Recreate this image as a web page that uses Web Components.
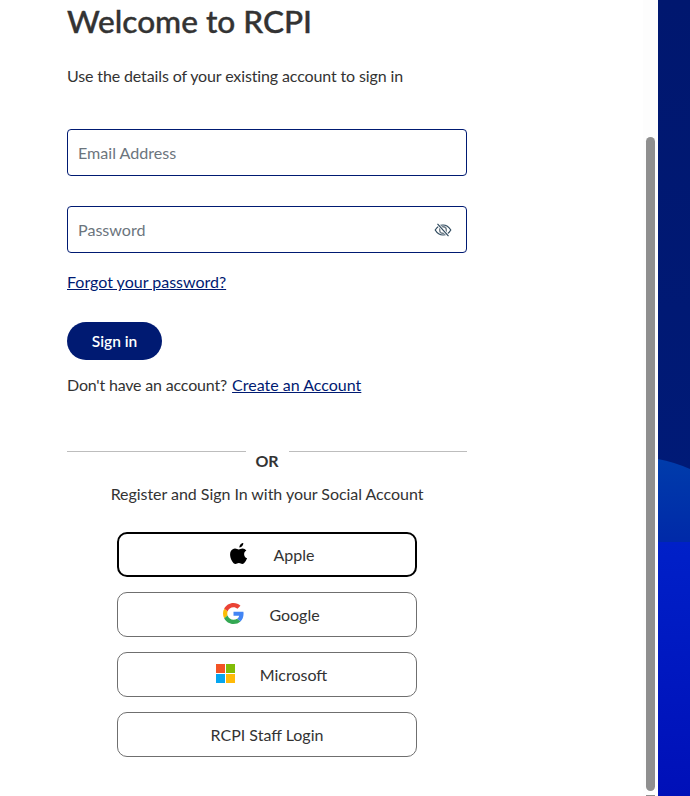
<!DOCTYPE html>
<html>
<head>
<meta charset="utf-8">
<title>Welcome to RCPI</title>
<style>
  html, body { margin: 0; height: 100%; overflow: hidden; background: #fff; }
  body { font-family: Lato, "Liberation Sans", sans-serif; color: #333; }
  a { color: #001a72; }
</style>
</head>
<body>
<login-page>
  <h1 slot="title">Welcome to RCPI</h1>
  <p slot="intro">Use the details of your existing account to sign in</p>
  <text-field label="Email Address"></text-field>
  <text-field label="Password" eye></text-field>
  <a slot="forgot" href="#">Forgot your password?</a>
  <sign-button slot="submit">Sign in</sign-button>
  <span slot="signup"><span style="letter-spacing:-.18px">Don't have an account?</span> <a href="#" style="margin-left:1px">Create an Account</a></span>
  <or-divider slot="divider">OR</or-divider>
  <span slot="social-title">Register and Sign In with your Social Account</span>
  <social-button slot="social" icon="apple" focused>Apple</social-button>
  <social-button slot="social" icon="google">Google</social-button>
  <social-button slot="social" icon="microsoft">Microsoft</social-button>
  <social-button slot="social">RCPI Staff Login</social-button>
</login-page>

<script>
const ICONS = {
    apple: `<svg width="18" height="21" viewBox="1 1 16.800 20.500"><path fill="#000" d="M13.600 1c.1 1.200-.3 2.200-1 3-.7.8-1.700 1.400-2.800 1.300-.1-1.100.4-2.200 1-2.900.7-.8 1.900-1.400 2.800-1.400zM17.300 16c-.5 1.100-.7 1.600-1.300 2.500-.9 1.300-2 2.900-3.400 2.900-1.300 0-1.600-.8-3.300-.8s-2.100.8-3.300.8c-1.400 0-2.500-1.400-3.300-2.700C.4 15.200.2 11 1.500 8.800 2.500 7.300 4 6.400 5.500 6.400c1.500 0 2.500.9 3.700.9 1.200 0 1.900-.9 3.700-.9 1.300 0 2.700.7 3.700 2-3.300 1.800-2.700 6.400.7 7.600z"/></svg>`,
    google: `<svg width="21" height="21" viewBox="0 0 48 48"><path fill="#EA4335" d="M24 9.500c3.500 0 6.700 1.300 9.100 3.500l6.800-6.800C35.800 2.400 30.200 0 24 0 14.600 0 6.500 5.400 2.600 13.200l7.900 6.200C12.400 13.600 17.700 9.500 24 9.500z"/><path fill="#4285F4" d="M47 24.500c0-1.600-.1-3.100-.4-4.500H24v9h12.900c-.6 3-2.200 5.500-4.700 7.200l7.700 6c4.500-4.200 7.100-10.300 7.100-17.700z"/><path fill="#FBBC05" d="M10.500 28.600c-.5-1.400-.8-3-.8-4.600s.3-3.200.8-4.600l-7.900-6.200C.9 16.500 0 20.100 0 24s.9 7.500 2.600 10.800l7.900-6.200z"/><path fill="#34A853" d="M24 48c6.500 0 11.900-2.100 15.900-5.800l-7.700-6c-2.200 1.500-4.900 2.300-8.200 2.300-6.300 0-11.600-4.100-13.500-9.900l-7.900 6.200C6.500 42.600 14.600 48 24 48z"/></svg>`,
    microsoft: `<svg width="19" height="19" viewBox="0 0 19 19"><rect width="9" height="9" fill="#f35325"/><rect x="10" width="9" height="9" fill="#81bc06"/><rect y="10" width="9" height="9" fill="#05a6f0"/><rect x="10" y="10" width="9" height="9" fill="#ffba08"/></svg>`
};

class LoginPage extends HTMLElement {
    connectedCallback() {
        this.attachShadow({ mode: 'open' }).innerHTML = `
        <style>
            :host { display: flex; height: 796px; position: relative; overflow: hidden; }
            main {
                flex: 1;
                padding: 0 0 0 67px;
                box-sizing: border-box;
            }
            .col { width: 400px; display: flex; flex-direction: column; }
            ::slotted(h1) {
                margin: 0;
                font: 500 31.600px/42px Lato, sans-serif;
                -webkit-text-stroke: .4px #333;
                color: #333;
            }
            ::slotted(p) { margin: 23px 0 0; font-size: 16px; line-height: 22px; letter-spacing: -.13px; color: #333; }
            .fields { display: flex; flex-direction: column; gap: 30px; margin-top: 42px; }
            .forgot { margin-top: 18px; font-size: 16px; line-height: 22px; }
            .submit { margin-top: 29px; }
            .signup { margin-top: 14px; font-size: 16px; line-height: 22px; }
            .divider { margin-top: 55px; }
            .social-title { margin-top: 12px; text-align: center; font-size: 16px; letter-spacing: -.04px; line-height: 22px; }
            .social { margin: 27px 50px 0; display: flex; flex-direction: column; gap: 15px; }
        </style>
        <main>
            <div class="col">
                <slot name="title"></slot>
                <slot name="intro"></slot>
                <div class="fields"><slot></slot></div>
                <div class="forgot"><slot name="forgot"></slot></div>
                <div class="submit"><slot name="submit"></slot></div>
                <div class="signup"><slot name="signup"></slot></div>
                <div class="divider"><slot name="divider"></slot></div>
                <div class="social-title"><slot name="social-title"></slot></div>
                <div class="social"><slot name="social"></slot></div>
            </div>
        </main>
        <overlay-scrollbar></overlay-scrollbar>
        <brand-panel></brand-panel>`;
    }
}

class TextField extends HTMLElement {
    connectedCallback() {
        const label = this.getAttribute('label') || '';
        const eye = this.hasAttribute('eye') ? `
            <svg width="18" height="16" viewBox="0 0 18 16" fill="none" stroke="#2f4a5e" stroke-width="1.200">
                <path d="M1.200 8C3 5 5.800 3 9 3s6 2 7.800 5c-1.800 3-4.600 5-7.800 5S3 11 1.200 8z"/>
                <circle cx="9" cy="8" r="3.300" stroke="#6d7b86" stroke-width="1.400"/>
                <path d="M3.500 1.800l11 12.400" stroke="#fff" stroke-width="2.600"/>
                <path d="M3.500 1.800l11 12.400"/>
            </svg>` : '';
        this.attachShadow({ mode: 'open' }).innerHTML = `
        <style>
            :host {
                display: flex;
                align-items: center;
                justify-content: space-between;
                height: 47px;
                box-sizing: border-box;
                border: 1px solid #001a72;
                border-radius: 4px;
                padding: 0 14px 0 10px;
                background: #fff;
                color: #6c757d;
                font-size: 16.100px;
            }
            svg { display: block; }
        </style>
        <span>${label}</span>${eye}`;
    }
}

class SignButton extends HTMLElement {
    connectedCallback() {
        this.attachShadow({ mode: 'open' }).innerHTML = `
        <style>
            :host {
                display: inline-flex;
                align-items: center;
                justify-content: center;
                width: 95px;
                height: 38px;
                border-radius: 19px;
                background: #001a72;
                color: #fff;
                font-size: 15.500px;
                font-weight: 600;
            }
        </style>
        <slot></slot>`;
    }
}

class OrDivider extends HTMLElement {
    connectedCallback() {
        this.attachShadow({ mode: 'open' }).innerHTML = `
        <style>
            :host {
                display: flex;
                font-size: 16px;
                font-weight: 700;
                line-height: 20px;
                color: #333;
            }
            i { flex: 1; height: 1px; background: #bdbdbd; }
            i:first-child { flex: none; width: 178px; }
            span { width: 43px; text-align: center; }
        </style>
        <i></i><span><slot></slot></span><i></i>`;
    }
}

class SocialButton extends HTMLElement {
    connectedCallback() {
        const icon = ICONS[this.getAttribute('icon')];
        this.attachShadow({ mode: 'open' }).innerHTML = `
        <style>
            :host {
                display: block;
                height: 45px;
                box-sizing: border-box;
                border: 1px solid #6f6f6f;
                border-radius: 10px;
                font-size: 16px;
                color: #333;
            }
            :host([focused]) { border: 2px solid #000; }
            .row {
                height: 100%;
                display: flex;
                align-items: center;
                justify-content: center;
            }
            :host([icon]) .row { gap: 25px; padding-left: 9px; box-sizing: border-box; }
            :host([icon=apple]) .row { gap: 26px; padding-left: 10px; }
            svg { display: block; margin-top: -2px; }
        </style>
        <div class="row">${icon || ''}<span><slot></slot></span></div>`;
    }
}

class OverlayScrollbar extends HTMLElement {
    connectedCallback() {
        this.attachShadow({ mode: 'open' }).innerHTML = `
        <style>
            :host { position: absolute; left: 643px; top: 0; width: 15px; height: 796px; background: #fdfdfd; }
            .thumb { position: absolute; left: 3px; top: 137px; width: 9px; height: 654px; background: #8f8f8f; border-radius: 5px; }
            .next { position: absolute; left: 3px; top: 795px; width: 9px; height: 1px; background: #8f8f8f; }
        </style>
        <div class="thumb"></div><div class="next"></div>`;
    }
}

class BrandPanel extends HTMLElement {
    connectedCallback() {
        this.attachShadow({ mode: 'open' }).innerHTML = `
        <style>
            :host { display: block; width: 32px; height: 796px; flex: none; }
            svg { display: block; }
        </style>
        <svg width="32" height="796" viewBox="0 0 32 796">
            <defs>
                <linearGradient id="a" x1="0" y1="0" x2="0" y2="1">
                    <stop offset="0" stop-color="#00176f"/><stop offset="1" stop-color="#001c7c"/>
                </linearGradient>
                <linearGradient id="b" x1="0" y1="0" x2="0" y2="1">
                    <stop offset="0" stop-color="#003cab"/><stop offset="1" stop-color="#0029a8"/>
                </linearGradient>
                <linearGradient id="c" x1="0" y1="0" x2="0" y2="1">
                    <stop offset="0" stop-color="#0020c8"/><stop offset="1" stop-color="#0010b8"/>
                </linearGradient>
            </defs>
            <rect width="32" height="796" fill="url(#a)"/>
            <path d="M0 459 Q16 462 32 469 V543 H0z" fill="url(#b)"/>
            <rect y="542" width="32" height="254" fill="url(#c)"/>
        </svg>`;
    }
}

customElements.define('text-field', TextField);
customElements.define('sign-button', SignButton);
customElements.define('or-divider', OrDivider);
customElements.define('social-button', SocialButton);
customElements.define('overlay-scrollbar', OverlayScrollbar);
customElements.define('brand-panel', BrandPanel);
customElements.define('login-page', LoginPage);
</script>
</body>
</html>
